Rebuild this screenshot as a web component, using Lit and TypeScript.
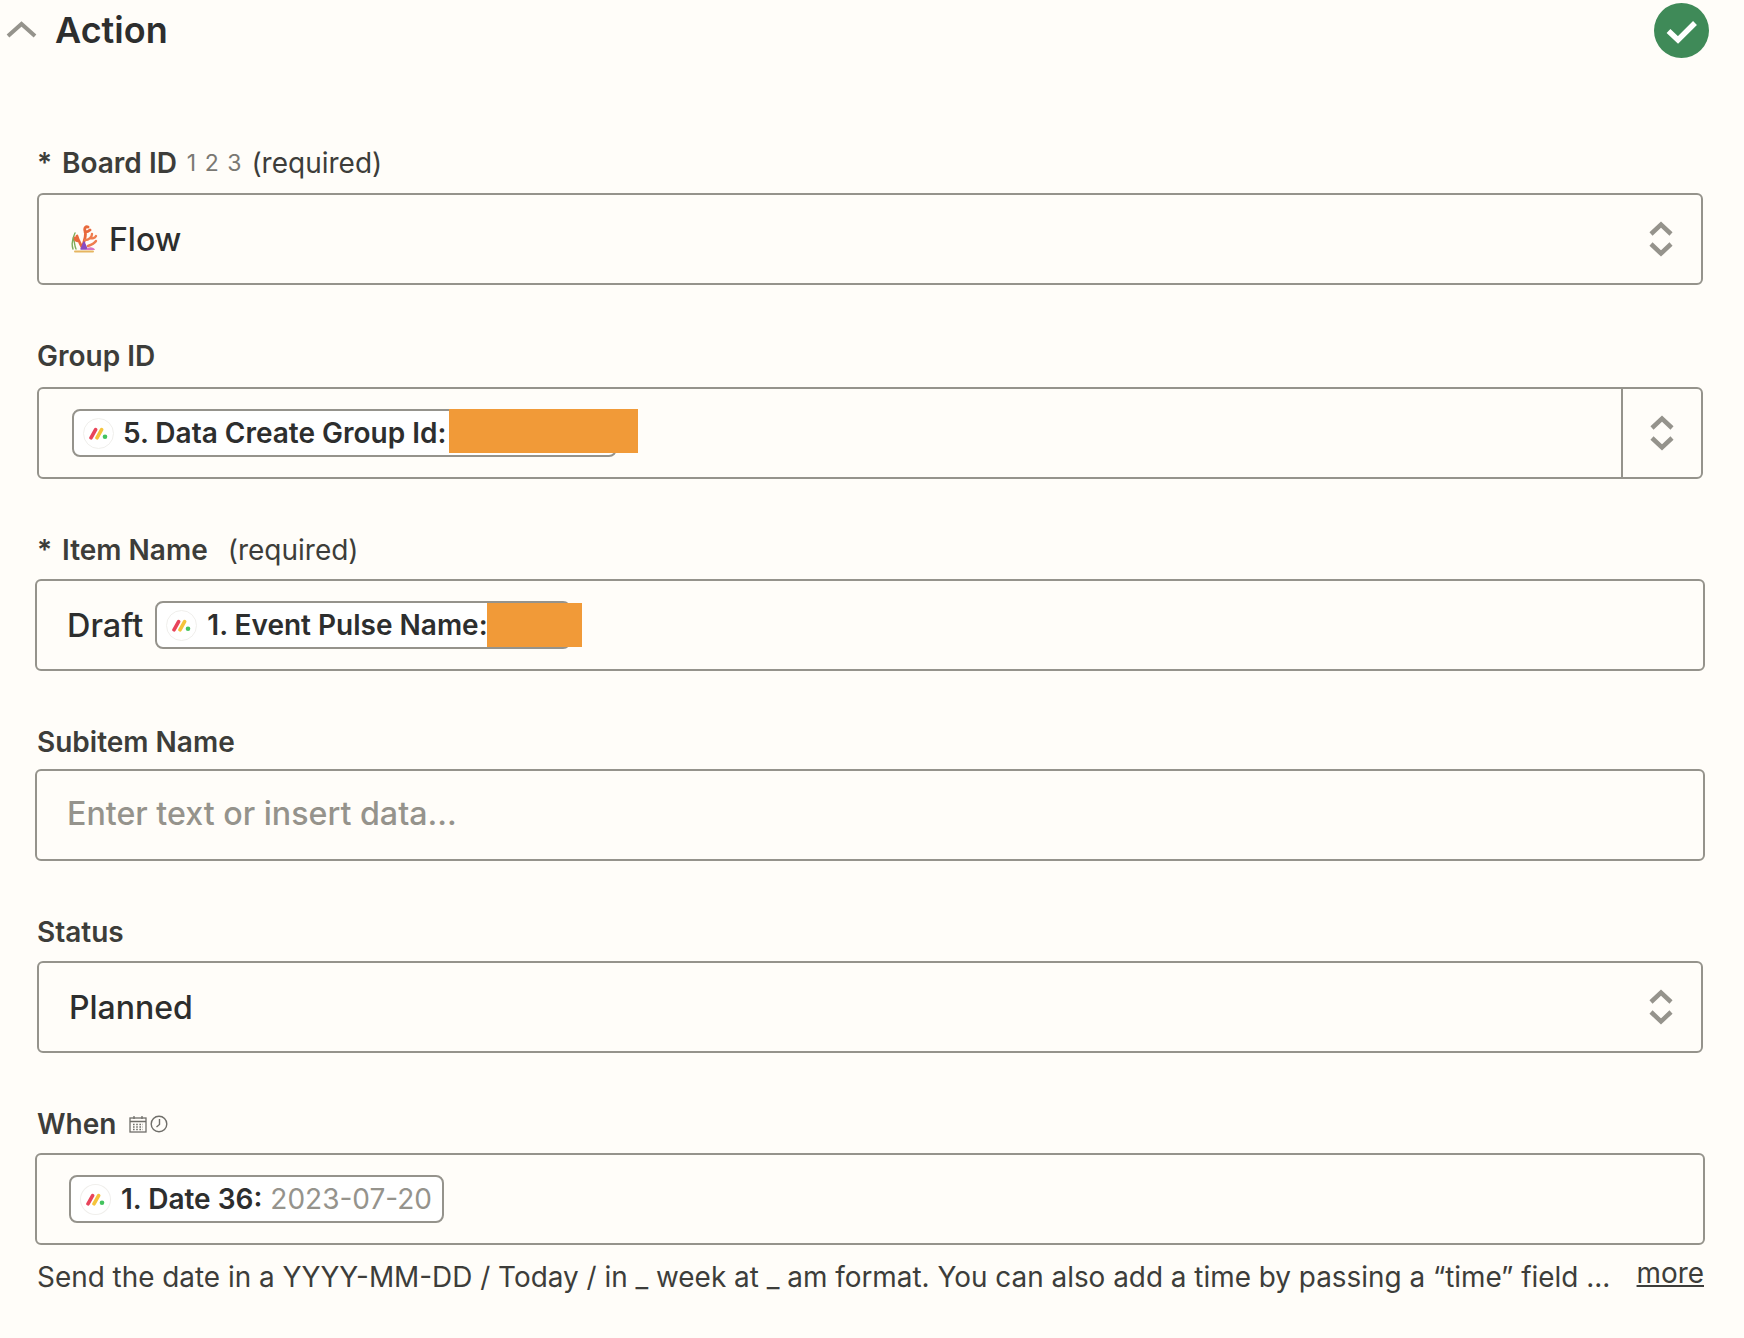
import { LitElement, html, css, svg } from 'lit';
import { customElement } from 'lit/decorators.js';

const updown = html`<svg class="updown" viewBox="0 0 24 36" fill="none" stroke="#95938c" stroke-width="4.5">
    <path d="M2 13 L12 3.5 L22 13" />
    <path d="M2 23 L12 32.5 L22 23" />
</svg>`;

const mondayLogo = html`<span class="logo"><svg viewBox="0 0 19 13" width="19" height="13">
    <path d="M2 10.8 L6.6 2.6" stroke="#e8445a" stroke-width="3.6" stroke-linecap="round" />
    <path d="M8 10.8 L12.6 2.6" stroke="#f5c33b" stroke-width="3.6" stroke-linecap="round" />
    <circle cx="16" cy="9.8" r="2.3" fill="#43c35e" />
</svg></span>`;

// coral emoji next to the board name
const coral = svg`<svg class="coral" viewBox="0 0 28 28" width="28" height="28" fill="none" stroke-linecap="round" stroke-linejoin="round">
    <path d="M3 24 C1 18 3 12 5 8 M6 24 C4 20 5 16 3 13" stroke="#7dab5a" stroke-width="1.4" />
    <path d="M12 22 C10 18 8 15 7 11 M9 16 C7 16 5 15 5 13" stroke="#e8693c" stroke-width="2.8" />
    <path d="M13 22 C13 16 17 12 15 6 C14 3 16 1 18 2 M15 7 C17 7 19 6 20 5" stroke="#e8693c" stroke-width="2.8" />
    <path d="M15 15 C19 15 22 12 22 9 M20 13 C22 14 25 13 26 11 M18 21 C21 20 24 19 26 16" stroke="#ef7d4e" stroke-width="2.4" />
    <path d="M11 24 L14 17 L17 24 Z" fill="#8a4bc0" stroke="#8a4bc0" stroke-width="1.5" />
    <path d="M16 25 C18 21 24 22 25 25 Z" fill="#d774c4" />
    <path d="M5 26.5 H23" stroke="#e6b560" stroke-width="2" />
</svg>`;

@customElement('app-root')
export class AppRoot extends LitElement {
    static styles = css`
        :host {
            display: block;
            min-height: 1338px;
            background: #fffdf9;
            font-family: Inter, 'Liberation Sans', sans-serif;
            color: #2d2e2e;
            overflow: hidden;
        }

        .header {
            display: flex;
            align-items: center;
            height: 60px;
            padding: 0 35px 0 6px;
        }

        .chevron {
            width: 31px;
            height: 17px;
            margin-top: -2px;
        }

        .header h1 {
            flex: 1;
            margin: 0 0 0 18px;
            font-size: 36px;
            font-weight: 600;
            line-height: 60px;
        }

        .done {
            width: 55px;
            height: 55px;
        }

        .form {
            padding: 0 41px 0 37px;
        }

        .field {
            margin-top: 51px;
        }

        .field.first {
            margin-top: 83px;
        }

        .label {
            display: flex;
            align-items: center;
            height: 40px;
            margin-bottom: 10px;
            font-size: 28px;
            font-weight: 600;
            color: #3d3d3a;
        }

        .label.snug {
            margin-bottom: 7px;
        }

        .label.mid {
            margin-bottom: 9px;
        }

        .label.loose {
            margin-bottom: 11px;
        }

        .star {
            width: 25px;
        }

        .numbers {
            margin-left: 10px;
            font-size: 23px;
            font-weight: 400;
            word-spacing: 2px;
            color: #7a7873;
        }

        .note {
            font-weight: 400;
            margin-left: 10px;
        }

        .note.wide {
            margin-left: 20px;
        }

        .box {
            display: flex;
            align-items: center;
            box-sizing: border-box;
            height: 92px;
            padding: 0 0 0 28px;
            border: 2px solid #95938c;
            border-radius: 6px;
            font-size: 32px;
            font-weight: 500;
        }

        .box.text {
            margin: 0 -2px 0 -2px;
            padding-left: 30px;
            font-size: 32.4px;
        }

        .grow {
            flex: 1;
            display: flex;
            align-items: center;
            min-width: 0;
        }

        .grow.plain {
            padding-left: 2px;
        }

        .coral {
            margin: 0 11px 0 3px;
        }

        .placeholder {
            margin-top: -4px;
            font-size: 32.2px;
            color: #95938c;
        }

        .updown {
            width: 24px;
            height: 36px;
            margin-right: 28px;
        }

        .stepper {
            display: flex;
            align-items: center;
            justify-content: center;
            align-self: stretch;
            width: 78px;
            border-left: 2px solid #95938c;
        }

        .stepper .updown {
            margin: 0;
        }

        .chip {
            position: relative;
            display: flex;
            align-items: center;
            box-sizing: border-box;
            height: 48px;
            padding-left: 9px;
            border: 2px solid #95938c;
            border-radius: 8px;
            background: #fff;
            font-size: 28px;
            font-weight: 600;
            white-space: nowrap;
        }

        .chip.group {
            width: 545px;
            margin-left: 5px;
        }

        .chip.event {
            width: 416px;
            margin-left: 12px;
        }

        .chip.date {
            width: 375px;
            margin-left: 2px;
            padding-right: 10px;
        }

        .logo {
            display: flex;
            align-items: center;
            justify-content: center;
            box-sizing: border-box;
            width: 31px;
            height: 31px;
            margin-right: 10px;
            border: 1px solid #f0efec;
            border-radius: 50%;
        }

        .group .logo {
            margin-right: 9px;
        }

        .value {
            margin-left: 8px;
            font-weight: 400;
            color: #95938c;
        }

        .redact {
            position: absolute;
            top: -2px;
            height: 44px;
            background: #f19a38;
        }

        .group .redact {
            left: 375px;
            width: 189px;
        }

        .event .redact {
            top: 0;
            left: 330px;
            width: 95px;
        }

        .when-icons {
            display: flex;
            align-items: center;
            gap: 3px;
            margin-left: 13px;
        }

        .help {
            display: flex;
            justify-content: space-between;
            margin-top: 12px;
            font-size: 27.9px;
            line-height: 40px;
            color: #3d3d3a;
        }

        .help a {
            margin: -4px -1px 0 0;
            color: inherit;
            text-decoration: underline;
        }
    `;

    render() {
        return html`
            <div class="header">
                <svg class="chevron" viewBox="0 0 31 17" fill="none" stroke="#95938c" stroke-width="4">
                    <path d="M2 15 L15.5 3 L29 15" />
                </svg>
                <h1>Action</h1>
                <svg class="done" viewBox="0 0 55 55">
                    <circle cx="27.5" cy="27.5" r="27.5" fill="#3f8a58" />
                    <path d="M14.5 28 L24 37 L41 20" fill="none" stroke="#fff" stroke-width="5.5" />
                </svg>
            </div>

            <div class="form">
                <div class="field first">
                    <div class="label">
                        <span class="star">*</span>Board ID
                        <span class="numbers">1 2 3</span>
                        <span class="note">(required)</span>
                    </div>
                    <div class="box">
                        <div class="grow">${coral}Flow</div>
                        ${updown}
                    </div>
                </div>

                <div class="field">
                    <div class="label loose">Group ID</div>
                    <div class="box">
                        <div class="grow">
                            <div class="chip group">
                                ${mondayLogo}5. Data Create Group Id:
                                <span class="redact"></span>
                            </div>
                        </div>
                        <div class="stepper">${updown}</div>
                    </div>
                </div>

                <div class="field">
                    <div class="label mid">
                        <span class="star">*</span>Item Name
                        <span class="note wide">(required)</span>
                    </div>
                    <div class="box text">
                        Draft
                        <div class="chip event">
                            ${mondayLogo}1. Event Pulse Name:
                            <span class="redact"></span>
                        </div>
                    </div>
                </div>

                <div class="field">
                    <div class="label snug">Subitem Name</div>
                    <div class="box text">
                        <span class="placeholder">Enter text or insert data...</span>
                    </div>
                </div>

                <div class="field">
                    <div class="label mid">Status</div>
                    <div class="box">
                        <div class="grow plain">Planned</div>
                        ${updown}
                    </div>
                </div>

                <div class="field">
                    <div class="label mid">
                        When
                        <span class="when-icons">
                            <svg viewBox="0 0 18 18" width="18" height="18" fill="none" stroke="#6f6e69" stroke-width="1.3">
                                <rect x="1" y="3" width="16" height="14" />
                                <path d="M1 6.5 H17 M5 1 V4 M13 1 V4" />
                                <path d="M4 9.5 H14 M4 12 H14 M4 14.5 H14" stroke-dasharray="1.6 1.6" />
                            </svg>
                            <svg viewBox="0 0 18 18" width="18" height="18" fill="none" stroke="#6f6e69" stroke-width="1.4">
                                <circle cx="9" cy="9" r="7.8" />
                                <path d="M9.5 4 V9.5 L6.5 12" />
                            </svg>
                        </span>
                    </div>
                    <div class="box text">
                        <div class="chip date">
                            ${mondayLogo}1. Date 36:
                            <span class="value">2023-07-20</span>
                        </div>
                    </div>
                    <div class="help">
                        <span>Send the date in a YYYY-MM-DD / Today / in _ week at _ am format. You can also add a time by passing a “time” field ...</span>
                        <a href="#">more</a>
                    </div>
                </div>
            </div>
        `;
    }
}
